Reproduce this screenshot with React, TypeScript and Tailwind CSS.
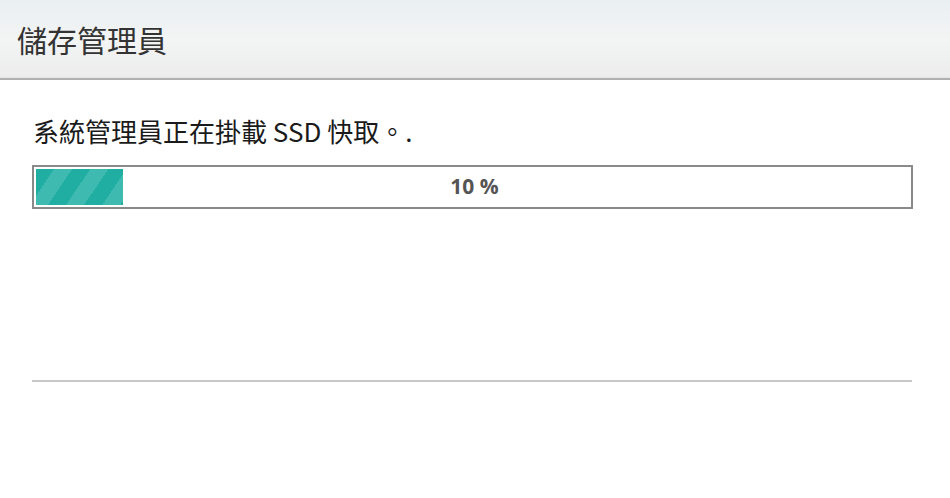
import React from "react";

export default function App() {
  const pct = 10;
  return (
    <div className="w-[950px] h-[498px] bg-white overflow-hidden" style={{ fontFamily: '"Noto Sans CJK TC", "Noto Sans", sans-serif' }}>
      <div className="h-[80px] border-b-2 border-[#b0b0b0] bg-[linear-gradient(to_bottom,#e9eff2_0%,#f3f4f4_50%,#ececec_100%)] flex items-center pl-[17px] shadow-[inset_0_-1px_0_#e4e4e4]">
        <span className="text-[30px] leading-none text-[#333]">儲存管理員</span>
      </div>
      <div className="pl-[32px] pr-[37px]">
        <div className="pt-[35px] text-[26px] leading-[32px] text-[#1a1a1a] pl-[1px]">系統管理員正在掛載 SSD 快取。.</div>
        <div className="mt-[18px] h-[44px] border-2 border-[#8a8a8a] bg-white p-[2px] relative">
          <div
            className="h-full bg-[repeating-linear-gradient(124deg,#20ada2_0px,#20ada2_15px,#3fbab0_15px,#3fbab0_30px)]"
            style={{ width: `${pct}%` }}
          />
          <div className="absolute inset-0 flex items-center justify-center text-[21px] font-bold text-[#555] pl-[4px]" style={{ fontFamily: '"Open Sans", sans-serif' }}>
            {pct} %
          </div>
        </div>
        <div className="mt-[171px] h-[2px] bg-[#c8c8c8] mr-[1px]" />
      </div>
    </div>
  );
}
